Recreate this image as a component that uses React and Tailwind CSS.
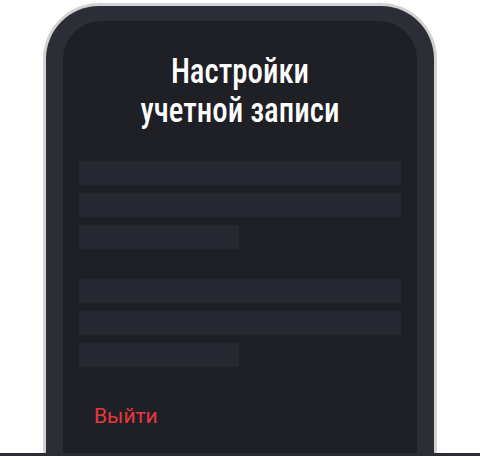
export default function App() {
  return (
    <div className="w-[480px] h-[456px] bg-white overflow-hidden flex flex-col">
      <div className="flex-1 flex justify-center pt-[3px] overflow-hidden">
        <div className="w-[394px] h-[520px] shrink-0 rounded-t-[56px] border-[3px] border-b-0 border-[#d2d2d4] bg-[#2c2e37] px-[17px] pt-[15px]">
          <div className="h-full rounded-t-[38px] bg-[#1f2025] px-4 pt-[31px]">
            <h1
              className="text-center text-white text-[35px] leading-[39px] font-medium scale-x-[0.88]"
              style={{ fontFamily: '"Roboto Condensed", "Liberation Sans Narrow", "DejaVu Sans Condensed", sans-serif' }}
            >
              Настройки
              <br />
              учетной записи
            </h1>
            <div className="mt-[31px] flex flex-col gap-2">
              <div className="h-6 bg-[#252830]" />
              <div className="h-6 bg-[#252830]" />
              <div className="h-6 w-[160px] bg-[#252830]" />
            </div>
            <div className="mt-[30px] flex flex-col gap-2">
              <div className="h-6 bg-[#252830]" />
              <div className="h-6 bg-[#252830]" />
              <div className="h-6 w-[160px] bg-[#252830]" />
            </div>
            <button
              className="mt-[35px] pl-[15px] text-[21px] leading-7 text-[#e8383d]"
              style={{ fontFamily: 'Roboto, sans-serif' }}
            >
              Выйти
            </button>
          </div>
        </div>
      </div>
      <div className="h-[3px] bg-[#2b2d33] shrink-0" />
    </div>
  );
}
